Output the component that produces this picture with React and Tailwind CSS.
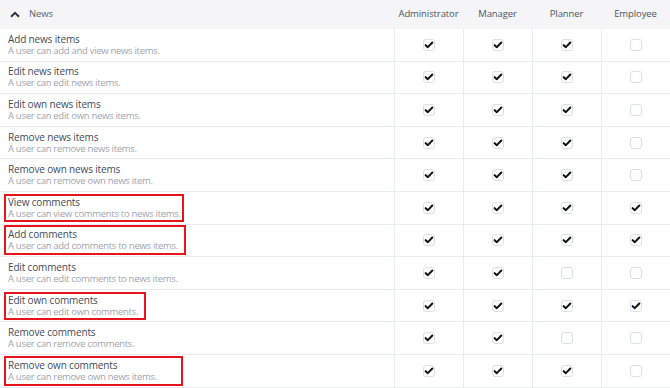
import React from 'react';

const rows = [
  { title: 'Add news items', desc: 'A user can add and view news items.', perms: [1, 1, 1, 0] },
  { title: 'Edit news items', desc: 'A user can edit news items.', perms: [1, 1, 1, 0] },
  { title: 'Edit own news items', desc: 'A user can edit own news items.', perms: [1, 1, 1, 0] },
  { title: 'Remove news items', desc: 'A user can remove news items.', perms: [1, 1, 1, 0] },
  { title: 'Remove own news items', desc: 'A user can remove own news item.', perms: [1, 1, 1, 0] },
  { title: 'View comments', desc: 'A user can view comments to news items.', perms: [1, 1, 1, 1], mark: 'w-[180px]' },
  { title: 'Add comments', desc: 'A user can add comments to news items.', perms: [1, 1, 1, 1], mark: 'w-[182px] py-[1px]' },
  { title: 'Edit comments', desc: 'A user can edit comments to news items.', perms: [1, 1, 0, 0] },
  { title: 'Edit own comments', desc: 'A user can edit own comments.', perms: [1, 1, 1, 1], mark: 'w-[142px]' },
  { title: 'Remove comments', desc: 'A user can remove comments.', perms: [1, 1, 0, 0] },
  { title: 'Remove own comments', desc: 'A user can remove own news items.', perms: [1, 1, 1, 0], mark: 'w-[179px] py-[1px]' },
];

const roles = ['Administrator', 'Manager', 'Planner', 'Employee'];

const Check = ({ on }) => (
  <span className="w-[12px] h-[12px] rounded-[3px] border border-[#dcdfe5] bg-white flex items-center justify-center">
    {on ? (
      <svg viewBox="0 0 12 12" className="w-[10px] h-[10px]">
        <path d="M2 6.2 L4.6 8.6 L10 3" fill="none" stroke="#111" strokeWidth="2.4" strokeLinecap="round" strokeLinejoin="round" />
      </svg>
    ) : null}
  </span>
);

const App = () => {
  return (
    <div className="w-[670px] h-[388px] overflow-hidden bg-white font-['Open_Sans',sans-serif]">
      {/* Header */}
      <div className="grid grid-cols-[394px_69px_69px_69px_69px] h-[29px] bg-[#f5f5f7] items-center">
        <div className="flex items-center pl-[10px] gap-[9px]">
          <svg viewBox="0 0 10 7" className="w-[10px] h-[7px]">
            <path d="M1 5.8 L5 1.8 L9 5.8" fill="none" stroke="#2d3340" strokeWidth="2" />
          </svg>
          <span className="text-[9.5px] tracking-[-0.1px] text-[#5b6270]">News</span>
        </div>
        {roles.map((r) => (
          <div key={r} className="text-center text-[9.5px] tracking-[-0.1px] text-[#4e5563]">{r}</div>
        ))}
      </div>

      {/* Rows */}
      {rows.map((row) => (
        <div key={row.title} className="grid grid-cols-[394px_69px_69px_69px_69px] h-[32.6px] border-b border-[#e9ecf3]">
          <div className="flex items-center pl-[4px]">
            <div className={`pl-[2px] border-2 ${row.mark ? `${row.mark} border-[#e8141b]` : 'border-transparent'}`}>
              <div className="text-[10px] leading-[12px] tracking-[-0.15px] text-[#444c5b]">{row.title}</div>
              <div className="text-[9.5px] leading-[12px] tracking-[-0.3px] text-[#9fa5af]">{row.desc}</div>
            </div>
          </div>
          {row.perms.map((p, i) => (
            <div key={i} className="border-l border-[#e9ecf3] flex items-center justify-center">
              <Check on={p} />
            </div>
          ))}
        </div>
      ))}
    </div>
  );
};

export default App;
